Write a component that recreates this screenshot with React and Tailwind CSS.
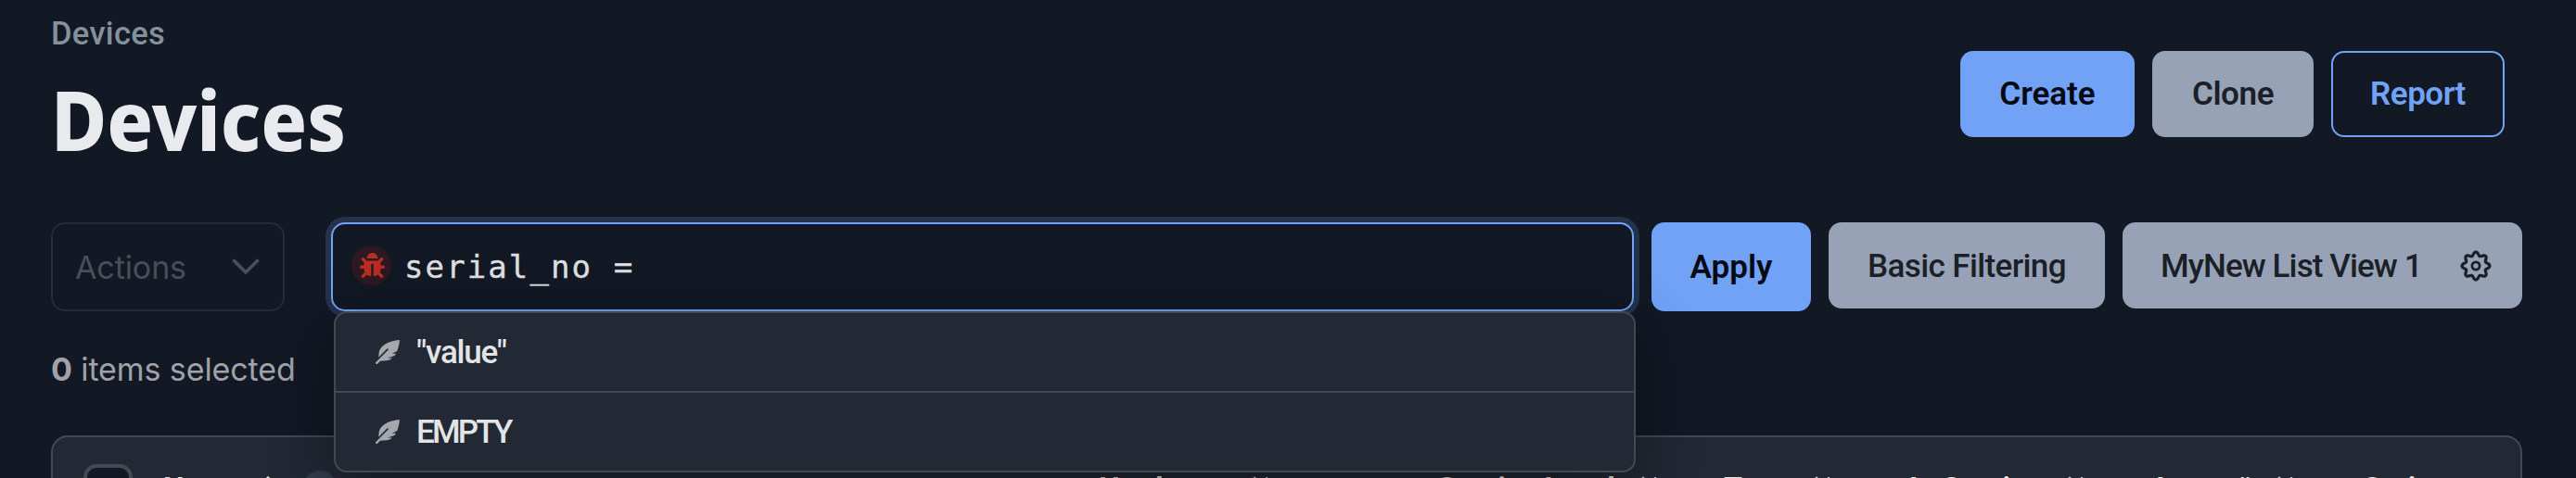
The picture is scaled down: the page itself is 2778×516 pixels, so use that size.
import { FaBug, FaFeatherAlt } from "react-icons/fa";

const gearOutline =
  Array.from({ length: 96 }, (_, i) => {
    const a = (i / 96) * Math.PI * 2;
    const r = 13.1 + 1.9 * Math.cos(8 * a);
    return `${i ? "L" : "M"}${(17 + r * Math.cos(a)).toFixed(2)} ${(17 + r * Math.sin(a)).toFixed(2)}`;
  }).join("") + "Z";

function Gear() {
  return (
    <svg viewBox="0 0 34 34" className="h-[34px] w-[34px] shrink-0" fill="none" stroke="currentColor" strokeLinejoin="round">
      <path d={gearOutline} strokeWidth="3.2" />
      <circle cx="17" cy="17" r="4.1" strokeWidth="2.8" />
    </svg>
  );
}

function SortIcon() {
  return (
    <svg viewBox="0 0 28 24" className="h-6 w-7 shrink-0" fill="none" stroke="#c4c6ca" strokeWidth="2.4">
      <path d="M2 8l6-6 6 6M8 1v21M15 16l6 6 6-6M21 22V1" />
    </svg>
  );
}

function Option({ children, tracking }) {
  return (
    <div className="flex h-[84px] items-center gap-[18px] pl-[43px] text-[35px] font-medium text-[#e3e4e6]">
      <FaFeatherAlt className="h-[26px] w-[26px] text-[#a6a8ad]" />
      <span className={`pt-0.5 ${tracking}`}>{children}</span>
    </div>
  );
}

const columns = [
  { label: "Hardware", width: "w-[365px]" },
  { label: "Service Level", width: "w-[309px]" },
  { label: "Type", width: "w-[200px]" },
  { label: "In Service", width: "w-[260px]" },
  { label: "Asset #", width: "w-[229px]" },
  { label: "Series", width: "w-[170px]", plain: true },
];

export default function App() {
  return (
    <div className="flex h-[516px] w-[2778px] flex-col overflow-hidden bg-[#121824] pl-[55px] font-['Roboto',sans-serif] whitespace-nowrap">
      <header className="flex h-[240px] shrink-0 justify-between pr-[77px]">
        <div className="pt-4">
          <div className="text-[34.500px] leading-10 font-medium tracking-[0.3px] text-[#84909c]">Devices</div>
          <h1 className="mt-[22px] origin-left scale-x-[0.915] font-['Noto_Sans',sans-serif] text-[90px] leading-[100px] font-extrabold text-[#e9eaee]">Devices</h1>
        </div>
        <div className="flex gap-[19px] pt-[55px] text-[35px] font-semibold">
          <button className="h-[93px] w-[188px] rounded-[14px] bg-[#71a2f6] pt-0.5 text-[#060a14]">Create</button>
          <button className="h-[93px] w-[174px] rounded-[14px] bg-[#98a2b6] pt-0.5 tracking-[-0.4px] text-[#1b1f27]">Clone</button>
          <button className="h-[93px] w-[187px] rounded-[14px] border-[2.5px] border-[#71a2f6] pt-0.5 tracking-[-0.5px] text-[#71a2f6]">Report</button>
        </div>
      </header>

      <div className="flex h-24 shrink-0 items-start">
        <button className="flex h-24 w-[252px] items-center justify-between rounded-[15px] border-2 border-[#262b37] pr-[25px] pl-6 font-['Inter',sans-serif] text-[34px] tracking-[-0.1px] text-[#4a4e58]">
          <span>Actions</span>
          <svg viewBox="0 0 30 18" className="h-[18px] w-[30px]" fill="none" stroke="currentColor" strokeWidth="3.8" strokeLinecap="round" strokeLinejoin="round">
            <path d="M2.500 2.500L15 15L27.500 2.500" />
          </svg>
        </button>

        <div className="relative ml-[50px] h-24 w-[1405px]">
          <div className="flex h-24 items-center rounded-[15px] border-2 border-[#71a2f6] bg-[#121824] pl-5 shadow-[0_0_0_6px_#24324c]">
            <span className="mb-1 flex h-[43px] w-[43px] items-center justify-center rounded-full bg-[#2e1822] pl-px">
              <FaBug className="h-[27px] w-[27px] text-[#b92d22]" />
            </span>
            <span className="ml-3.5 font-['DejaVu_Sans_Mono',monospace] text-[34px] tracking-[2.1px] text-[#dddedf] [-webkit-text-stroke:0.4px_#dddedf]">serial_no =</span>
          </div>
          <div className="absolute top-24 left-[3px] z-10 w-[1404px] rounded-[14px] border-2 border-[#444851] bg-[#222834] shadow-[0_20px_64px_rgba(0,0,0,0.42)]">
            <Option tracking="tracking-[-1.200px]">"value"</Option>
            <div className="h-0.5 bg-[#444851]" />
            <Option tracking="tracking-[-2.800px]">EMPTY</Option>
          </div>
        </div>

        <button className="ml-[19px] h-24 w-[172px] rounded-[14px] bg-[#71a2f6] pt-0.5 text-[35px] font-semibold text-[#060a14]">Apply</button>
        <button className="ml-[19px] h-[93px] w-[298px] rounded-[14px] bg-[#98a2b6] pt-[3px] text-[35px] font-medium tracking-[-0.6px] text-[#1b1f27]">Basic Filtering</button>
        <button className="ml-[19px] flex h-[93px] w-[431px] items-center justify-between rounded-[14px] bg-[#98a2b6] pr-[33px] pl-[41px] text-[35px] font-medium tracking-[-0.9px] text-[#1b1f27]">
          <span className="pt-[3px]">MyNew List View 1</span>
          <Gear />
        </button>
      </div>

      <div className="mt-[43px] h-[91px] shrink-0 font-['Inter',sans-serif] text-[34px] leading-10 tracking-[-0.1px] text-[#a0a2a7]">
        <b className="font-bold">0</b> items selected
      </div>

      <div className="flex h-[120px] w-[2665px] shrink-0 items-start rounded-t-[18px] border-2 border-[#444851] bg-[#222834] pl-[33px] text-[32px] leading-9 font-bold text-[#e3e4e6]">
        <span className="mt-[29px] h-[53px] w-[53px] rounded-[14px] border-4 border-[#444851] bg-[#121824]" />
        <div className="mt-9 ml-[33px] flex w-[1009px] items-center">
          Name
          <svg viewBox="0 0 20 24" className="ml-[18px] h-6 w-5" fill="none" stroke="currentColor" strokeWidth="3">
            <path d="M10 1v22M2 10l8-8 8 8" />
          </svg>
          <span className="ml-7 flex h-9 w-9 items-center justify-center rounded-full bg-[#323c4b] text-[24px]">i</span>
        </div>
        {columns.map((c) => (
          <div key={c.label} className={`mt-9 flex shrink-0 items-center gap-[22px] ${c.width}`}>
            <span>{c.label}</span>
            {!c.plain && <SortIcon />}
          </div>
        ))}
      </div>
    </div>
  );
}
